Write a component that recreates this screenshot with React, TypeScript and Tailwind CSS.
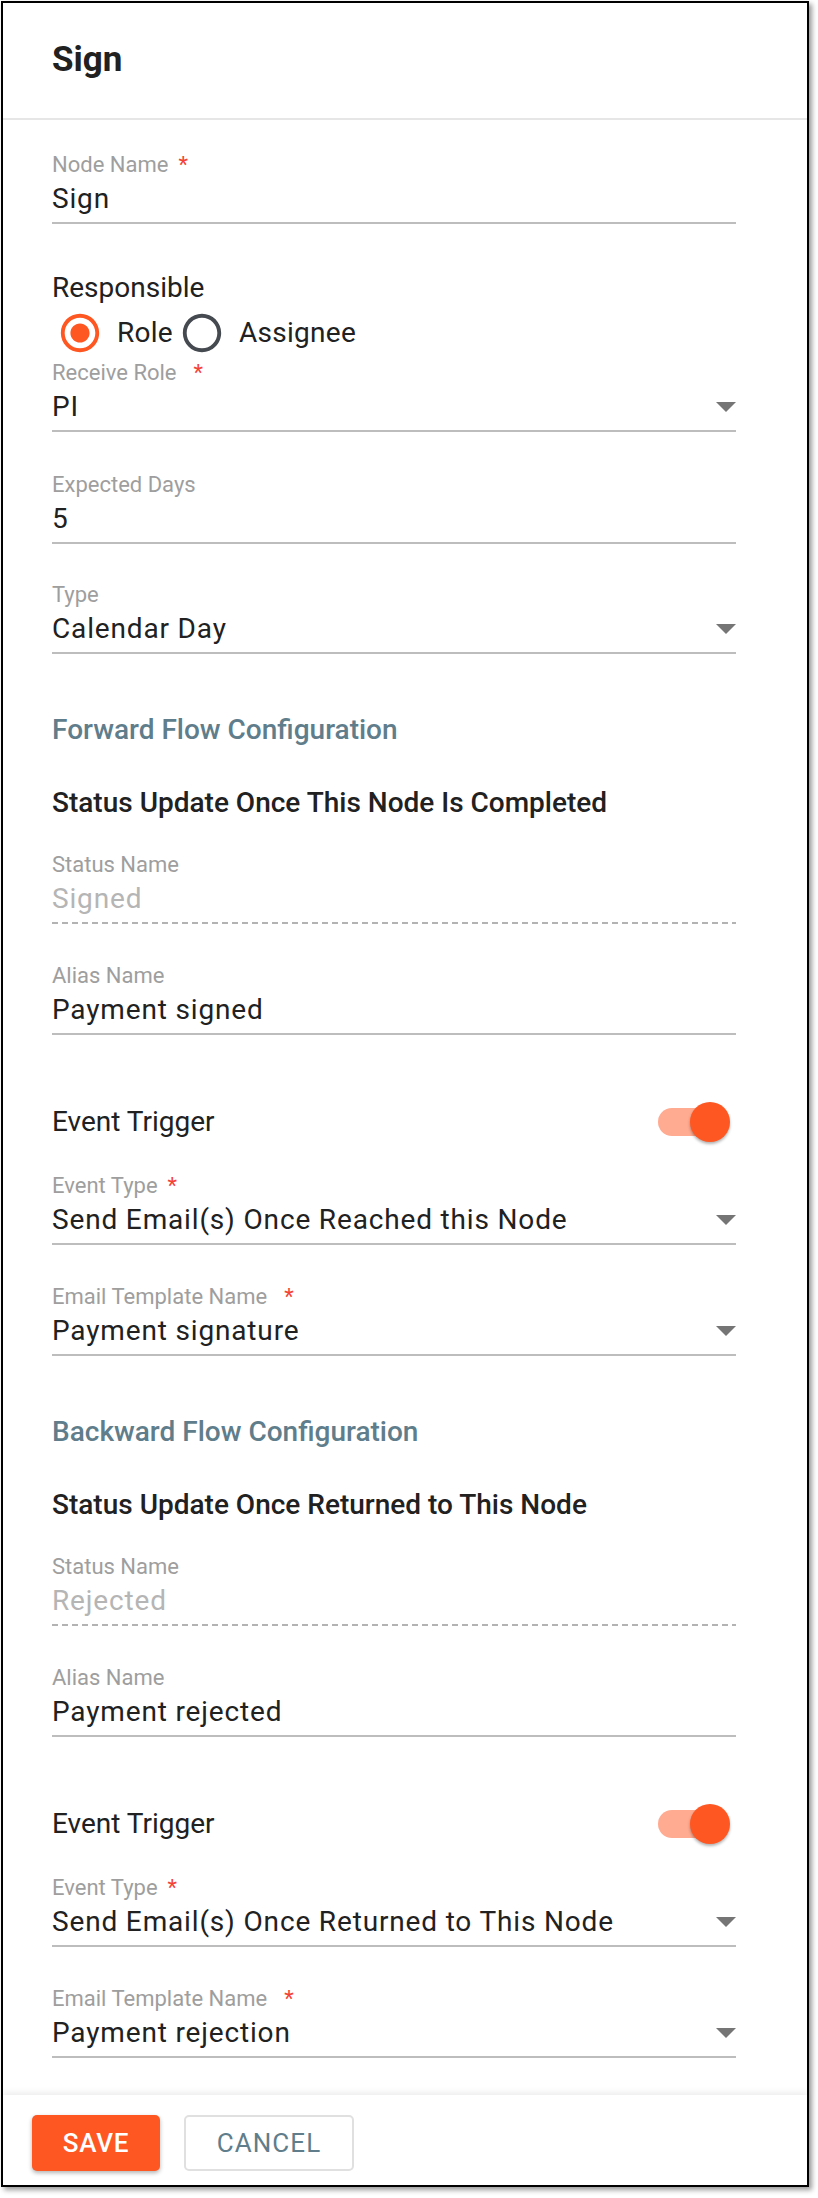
import type { ReactNode } from 'react'

interface FieldProps {
  label: string
  value: string
  required?: boolean
  wideStar?: boolean
  select?: boolean
  disabled?: boolean
  className?: string
}

function Arrow() {
  return (
    <svg width="20" height="10" viewBox="0 0 20 10" className="shrink-0">
      <polygon points="0,0 20,0 10,10" fill="#757575" />
    </svg>
  )
}

function Field({ label, value, required, wideStar, select, disabled, className = '' }: FieldProps) {
  return (
    <div className={className}>
      <div className="h-6 text-[22px] leading-6 text-[#9e9e9e] whitespace-nowrap">
        {label}
        {required && <span className={`text-[#f44336] ${wideStar ? 'ml-[17px]' : 'ml-[10px]'}`}>*</span>}
      </div>
      <div className="mt-[6px] flex h-8 items-center">
        <span
          className={`flex-1 text-[28px] leading-8 tracking-[0.03em] whitespace-nowrap ${
            disabled ? 'text-[#b5b5b5]' : 'text-[#212121]'
          }`}
        >
          {value}
        </span>
        {select && <Arrow />}
      </div>
      {disabled ? (
        <div className="mt-[7px] h-[2px] bg-[linear-gradient(to_right,#b3b3b3_60%,transparent_60%)] bg-[length:10px_2px] bg-repeat-x" />
      ) : (
        <div className="mt-[7px] h-[2px] bg-[#bdbdbd]" />
      )}
    </div>
  )
}

function Toggle() {
  return (
    <div className="relative mr-[10px] h-7 w-[68px] rounded-full bg-[#ffab91]">
      <div className="absolute right-[-4px] top-[-6px] h-10 w-10 rounded-full bg-[#ff5722] shadow-[0_2px_3px_rgba(0,0,0,0.3)]" />
    </div>
  )
}

function Radio({ checked }: { checked: boolean }) {
  return (
    <svg width="46" height="46" viewBox="0 0 24 24" className="shrink-0">
      {checked ? (
        <path
          fill="#ff5722"
          d="M12 7c-2.76 0-5 2.240-5 5s2.24 5 5 5 5-2.24 5-5-2.24-5-5-5zm0-5C6.48 2 2 6.48 2 12s4.48 10 10 10 10-4.48 10-10S17.52 2 12 2zm0 18c-4.42 0-8-3.58-8-8s3.58-8 8-8 8 3.58 8 8-3.58 8-8 8z"
        />
      ) : (
        <path
          fill="#454950"
          d="M12 2C6.48 2 2 6.48 2 12s4.48 10 10 10 10-4.48 10-10S17.52 2 12 2zm0 18c-4.42 0-8-3.58-8-8s3.58-8 8-8 8 3.58 8 8-3.58 8-8 8z"
        />
      )}
    </svg>
  )
}

function Heading({ children, className = '' }: { children: ReactNode; className?: string }) {
  return <div className={`h-8 text-[28px] font-medium leading-8 whitespace-nowrap ${className}`}>{children}</div>
}

interface FlowProps {
  title: string
  subtitle: string
  status: string
  alias: string
  eventType: string
  template: string
}

function FlowSection({ title, subtitle, status, alias, eventType, template }: FlowProps) {
  return (
    <>
      <Heading className="mt-[60px] text-[#607d8b]">{title}</Heading>
      <Heading className="mt-[41px] text-[#212121]">{subtitle}</Heading>
      <Field className="mt-[34px]" label="Status Name" value={status} disabled />
      <Field className="mt-[40px]" label="Alias Name" value={alias} />
      <div className="mt-[67px] flex h-10 items-center justify-between">
        <span className="text-[28px] leading-8 text-[#212121]">Event Trigger</span>
        <Toggle />
      </div>
      <Field className="mt-[32px]" label="Event Type" value={eventType} required select />
      <Field className="mt-[40px]" label="Email Template Name" value={template} required wideStar select />
    </>
  )
}

export default function App() {
  return (
    <div className="min-h-screen bg-white p-px font-['Roboto',sans-serif]">
      <div className="flex w-[808px] flex-col border-2 border-black bg-white shadow-[3px_3px_5px_rgba(0,0,0,0.4)]">
        <div className="border-b-2 border-[#e6e6e6] pl-[49px] pt-[37px] pb-[38px]">
          <h1 className="h-10 text-[35px] font-bold leading-10 text-[#212121]">Sign</h1>
        </div>

        <div className="flex w-[733px] flex-col pl-[49px] pt-[33px] pb-[37px]">
          <Field label="Node Name" value="Sign" required />

          <div className="mt-[48px] h-8 text-[28px] leading-8 text-[#212121]">Responsible</div>
          <div className="ml-[5px] mt-[6px] flex h-[46px] items-center gap-[6px] text-[28px] leading-8 tracking-[0.01em] text-[#212121]">
            <label className="flex items-center gap-[14px]">
              <Radio checked />
              <span>Role</span>
            </label>
            <label className="flex items-center gap-[14px]">
              <Radio checked={false} />
              <span>Assignee</span>
            </label>
          </div>

          <Field className="mt-[5px]" label="Receive Role" value="PI" required wideStar select />
          <Field className="mt-[41px]" label="Expected Days" value="5" />
          <Field className="mt-[39px]" label="Type" value="Calendar Day" select />

          <FlowSection
            title="Forward Flow Configuration"
            subtitle="Status Update Once This Node Is Completed"
            status="Signed"
            alias="Payment signed"
            eventType="Send Email(s) Once Reached this Node"
            template="Payment signature"
          />
          <FlowSection
            title="Backward Flow Configuration"
            subtitle="Status Update Once Returned to This Node"
            status="Rejected"
            alias="Payment rejected"
            eventType="Send Email(s) Once Returned to This Node"
            template="Payment rejection"
          />
        </div>

        <div className="flex gap-6 pl-[29px] pt-5 pb-[14px] shadow-[0_-3px_6px_rgba(0,0,0,0.07)]">
          <button className="flex h-14 w-32 items-center justify-center rounded-[5px] bg-[#ff5722] text-[26px] font-medium tracking-[0.03em] text-white shadow-[0_2px_4px_rgba(0,0,0,0.3)]">
            SAVE
          </button>
          <button className="flex h-14 w-[170px] items-center justify-center rounded-[5px] border-2 border-[#e0e0e0] text-[26px] tracking-[0.04em] text-[#607d8b]">
            CANCEL
          </button>
        </div>
      </div>
    </div>
  )
}
